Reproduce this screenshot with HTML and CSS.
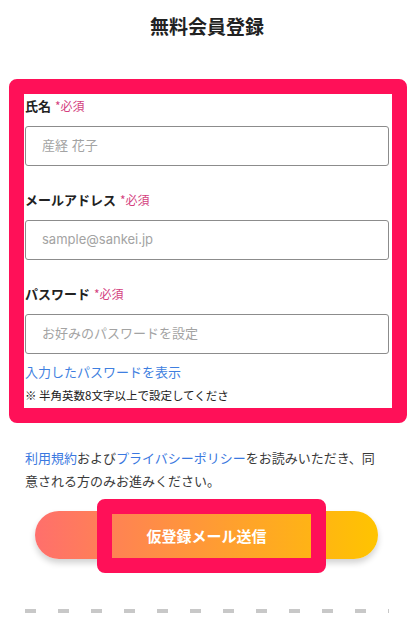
FILE: index.html
```html
<!DOCTYPE html>
<html lang="ja">
<head>
<meta charset="utf-8">
<meta name="viewport" content="width=device-width, initial-scale=1">
<title>無料会員登録</title>
<link rel="stylesheet" href="styles.css">
</head>
<body>
<div class="page">
  <h1 class="title">無料会員登録</h1>

  <form class="form-box">
    <div class="field">
      <label class="label">氏名<span class="req">*必須</span></label>
      <input class="input" type="text" placeholder="産経 花子">
    </div>
    <div class="field">
      <label class="label">メールアドレス<span class="req">*必須</span></label>
      <input class="input" type="email" placeholder="sample@sankei.jp">
    </div>
    <div class="field field-last">
      <label class="label">パスワード<span class="req">*必須</span></label>
      <input class="input" type="password" placeholder="お好みのパスワードを設定">
    </div>
    <a class="show-pw" href="#">入力したパスワードを表示</a>
    <p class="note">※ 半角英数8文字以上で設定してくださ</p>
  </form>

  <p class="consent"><a class="link" href="#">利用規約</a>および<a class="link" href="#">プライバシーポリシー</a>をお読みいただき、同意される方のみお進みください。</p>

  <div class="btn-wrap">
    <button class="submit" type="button">仮登録メール送信</button>
    <span class="highlight"></span>
  </div>

  <div class="dashes"></div>
</div>
</body>
</html>
```

FILE: styles.css
```css
* {
  box-sizing: border-box;
}

html, body {
  margin: 0;
  padding: 0;
  background: #ffffff;
}

body {
  font-family: "Noto Sans CJK JP", "Noto Sans", sans-serif;
  color: #222222;
}

.page {
  padding: 0 25px;
}

.title {
  margin: 0;
  padding-top: 11px;
  font-size: 19px;
  line-height: 30px;
  font-weight: 700;
  text-align: center;
  color: #222222;
}

.form-box {
  display: flex;
  flex-direction: column;
  margin: 38px -18px 0 -16px;
  padding: 2px 3px 4px 1px;
  border: 15px solid #ff1058;
  border-radius: 8px;
  background: #ffffff;
}

.field {
  display: flex;
  flex-direction: column;
  margin-bottom: 24px;
}

.field-last {
  margin-bottom: 0;
}

.label {
  font-size: 13px;
  line-height: 20px;
  font-weight: 700;
  color: #222222;
}

.req {
  margin-left: 4px;
  font-size: 12px;
  font-weight: 400;
  color: #d43f80;
}

.input {
  margin-top: 10px;
  width: 100%;
  height: 40px;
  padding: 0 16px 2px;
  border: 1px solid #8c8c8c;
  border-radius: 3px;
  font-family: Inter, "Noto Sans CJK JP", "Noto Sans", sans-serif;
  font-size: 13px;
  color: #222222;
  background: #ffffff;
  outline: none;
}

.input::placeholder {
  color: #a3a3a3;
}

.show-pw {
  margin-top: 8px;
  font-size: 13px;
  line-height: 20px;
  color: #3f7fe0;
  text-decoration: none;
}

.note {
  margin: 4px 0 0;
  font-size: 11.5px;
  line-height: 18px;
  color: #222222;
}

.consent {
  margin: 23px 0 0;
  padding-right: 4px;
  font-size: 13px;
  line-height: 23px;
  color: #3a3a3a;
}

.link {
  color: #3a78e0;
  text-decoration: none;
}

.btn-wrap {
  position: relative;
  margin: 19px 11px 0 10px;
}

.submit {
  display: block;
  width: 100%;
  height: 48px;
  border: none;
  border-radius: 24px;
  background: linear-gradient(90deg, #ff6f6c 0%, #ffc400 100%);
  box-shadow: 0 4px 6px rgba(0, 0, 0, 0.18);
  font-family: "Noto Sans CJK JP", "Noto Sans", sans-serif;
  font-size: 15px;
  font-weight: 700;
  color: #ffffff;
  cursor: pointer;
}

.highlight {
  position: absolute;
  left: 62px;
  top: -12px;
  width: 229px;
  height: 74px;
  border: 15px solid #ff1058;
  border-radius: 8px;
  pointer-events: none;
}

.dashes {
  margin-top: 50px;
  height: 4px;
  background-image: linear-gradient(90deg, #c8c8c8 0, #c8c8c8 11px, transparent 11px);
  background-size: 33px 4px;
  background-repeat: repeat-x;
}
```
